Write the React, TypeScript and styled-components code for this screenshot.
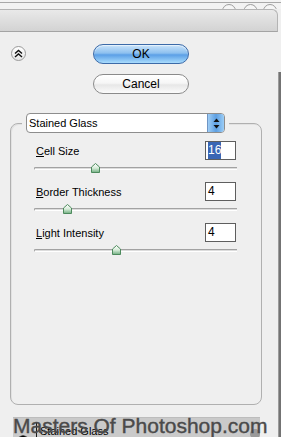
import React from "react";
import styled, { createGlobalStyle } from "styled-components";

const Global = createGlobalStyle`
  html, body { margin: 0; padding: 0; background: #efefef; }
  body { font-family: "Liberation Sans", Arial, sans-serif; }
  * { box-sizing: border-box; }
`;

const Root = styled.div`
  width: 281px;
  height: 437px;
  overflow: hidden;
  background: #efefef;
  display: flex;
  flex-direction: column;
  font-family: "Liberation Sans", Arial, sans-serif;
  color: #000;
`;

const TopStrip = styled.div`
  height: 9px;
  padding-top: 2px;
  background: #f3f3f3;
  display: flex;
  flex-direction: column;
`;

const TopLine = styled.div`
  height: 1px;
  background: #a9a9a9;
`;

const Circles = styled.svg`
  display: block;
  width: 281px;
  height: 6px;
`;

const Header = styled.div`
  height: 23px;
  margin-right: 3px;
  border-top: 1px solid #b4b4b4;
  border-right: 1px solid #b4b4b4;
  border-bottom: 1px solid #a4a4a4;
  border-top-right-radius: 6px;
  background: linear-gradient(to bottom, #e9e9e9, #d3d3d3);
`;

const Body = styled.div`
  flex: 1;
  display: flex;
`;

const Main = styled.div`
  flex: 1;
  display: flex;
  flex-direction: column;
`;

const RightEdge = styled.div`
  width: 3px;
  margin-top: 40px;
  border-left: 1px solid #9c9c9c;
  background: #737373;
`;

const ActionsRow = styled.div`
  display: flex;
  padding-top: 12px;
`;

const ExpandButton = styled.div`
  width: 15px;
  height: 15px;
  margin: 2px 0 0 11px;
  border-radius: 50%;
  border: 1px solid #9a9a9a;
  background: linear-gradient(to bottom, #ffffff, #e6e6e6);
  display: flex;
  align-items: center;
  justify-content: center;
`;

const ButtonColumn = styled.div`
  display: flex;
  flex-direction: column;
  gap: 10px;
  margin-left: 67px;
`;

const PillButton = styled.div<{ $primary?: boolean }>`
  width: 96px;
  height: 20px;
  border-radius: 10px;
  display: flex;
  align-items: center;
  justify-content: center;
  font-size: 12px;
  color: #000;
  border: 1px solid ${(p) => (p.$primary ? "#3c6aa8" : "#8a8a8a")};
  background: ${(p) =>
    p.$primary
      ? "linear-gradient(to bottom, #c9e3fa 0%, #8dc0ef 45%, #5b9fe6 55%, #a9dcfd 100%)"
      : "linear-gradient(to bottom, #ffffff 0%, #f6f6f6 45%, #e7e7e7 55%, #fbfbfb 100%)"};
  box-shadow: ${(p) => (p.$primary ? "inset 0 1px 1px rgba(255,255,255,0.6)" : "inset 0 1px 1px #fff")};
`;

const Group = styled.div`
  margin: 29px 0 0 10px;
  width: 252px;
  height: 282px;
  border: 1px solid #b0b0b0;
  border-radius: 8px;
  box-shadow: inset 1px 1px 0 #e2e2e2;
  display: flex;
  flex-direction: column;
  padding: 0 25px 0 25px;
`;

const DropdownWrap = styled.div`
  margin: -11px 0 0 -14px;
  padding: 0 4px;
  width: 207px;
  background: #efefef;
`;

const Dropdown = styled.div`
  height: 20px;
  display: flex;
  border: 1px solid #8d8d8d;
  border-radius: 4px;
  background: #fff;
  overflow: hidden;
`;

const DropdownText = styled.div`
  flex: 1;
  font-size: 11px;
  line-height: 18px;
  padding-left: 2px;
`;

const Stepper = styled.div`
  width: 17px;
  border-left: 1px solid #6f95c4;
  background: linear-gradient(to right, #9fcdf5, #5d9fe2 50%, #9bcdf6);
  display: flex;
  align-items: center;
  justify-content: center;
`;

const Param = styled.div`
  display: flex;
  flex-direction: column;
`;

const ParamRow = styled.div<{ $first?: boolean }>`
  height: 19px;
  margin-top: ${(p) => (p.$first ? "8px" : "0")};
  display: flex;
  justify-content: space-between;
  align-items: flex-start;
`;

const Label = styled.div`
  font-size: 11px;
  line-height: 13px;
  padding-top: 4px;
  u { text-decoration: underline; text-underline-offset: 1px; }
`;

const ValueBox = styled.div`
  width: 31px;
  height: 19px;
  border: 1px solid #5e5e5e;
  background: #fff;
  font-size: 12px;
  line-height: 17px;
  padding-left: 2px;
`;

const Selected = styled.span`
  background: #3a66b4;
  color: #fff;
  padding: 0 0 1px 0;
  display: inline-block;
  line-height: 16px;
`;

const SliderRow = styled.div`
  height: 22px;
  margin: 0 -1px 0 -2px;
  position: relative;
`;

const Track = styled.div`
  position: absolute;
  left: 0;
  right: 0;
  top: 7px;
  height: 3px;
  border-top: 1px solid #a2a2a2;
  border-left: 1px solid #a2a2a2;
  border-bottom: 1px solid #ffffff;
  border-radius: 2px 0 0 2px;
  background: #dcdcdc;
`;

const Thumb = styled.svg`
  position: absolute;
  top: 3px;
  width: 9px;
  height: 10px;
`;

const LayersBar = styled.div`
  margin: 12px 0 0 13px;
  width: 247px;
  height: 20px;
  background: #cacaca;
  border-top: 1px solid #bdbdbd;
  position: relative;
  display: flex;
  align-items: flex-start;
  padding-top: 4px;
`;

const EyeCell = styled.div`
  width: 23px;
  padding: 6px 0 0 4px;
`;

const LayerDivider = styled.div`
  width: 1px;
  height: 20px;
  background: #1a1a1a;
`;

const LayerName = styled.div`
  font-size: 11px;
  line-height: 13px;
  padding: 3px 0 0 3px;
  color: #000;
`;

const ScrollKnob = styled.div`
  margin-left: auto;
  margin-top: 7px;
  width: 10px;
  height: 10px;
  border-radius: 50%;
  background: #9a9a9a;
`;

const Watermark = styled.div`
  position: absolute;
  left: 0;
  top: -3px;
  font-family: "Liberation Sans", Arial, sans-serif;
  font-size: 21px;
  line-height: 21px;
  color: #4a4a4a;
  white-space: nowrap;
  -webkit-text-stroke: 0.4px #4a4a4a;
`;

const params = [
  { key: "C", rest: "ell Size", value: "16", pos: 0.305, selected: true },
  { key: "B", rest: "order Thickness", value: "4", pos: 0.167, selected: false },
  { key: "L", rest: "ight Intensity", value: "4", pos: 0.404, selected: false },
];

const TRACK_W = 203;

function ThumbIcon({ pos }: { pos: number }) {
  return (
    <Thumb viewBox="0 0 9 10" style={{ left: Math.round(pos * TRACK_W - 4.5) }}>
      <defs>
        <linearGradient id="thumbFill" x1="0" y1="0" x2="0" y2="1">
          <stop offset="0" stopColor="#ffffff" />
          <stop offset="0.5" stopColor="#d7ecd9" />
          <stop offset="1" stopColor="#6fae80" />
        </linearGradient>
      </defs>
      <path d="M4.5 0.5 L8.5 4 L8.5 9.5 L0.5 9.5 L0.5 4 Z" fill="url(#thumbFill)" stroke="#4d8a5d" strokeWidth="1" />
    </Thumb>
  );
}

export default function App() {
  return (
    <Root>
      <Global />
      <TopStrip>
        <TopLine />
        <Circles viewBox="0 0 281 6">
          <circle cx="229" cy="8" r="6.5" fill="#f6f6f6" stroke="#9d9d9d" strokeWidth="1" />
          <circle cx="250.5" cy="8" r="6.5" fill="#f6f6f6" stroke="#9d9d9d" strokeWidth="1" />
          <circle cx="270" cy="8" r="6.5" fill="#f6f6f6" stroke="#9d9d9d" strokeWidth="1" />
        </Circles>
      </TopStrip>
      <Header />
      <Body>
        <Main>
          <ActionsRow>
            <ExpandButton>
              <svg width="9" height="9" viewBox="0 0 9 9">
                <path d="M1 4.5 L4.5 1.5 L8 4.5 M1 8 L4.5 5 L8 8" fill="none" stroke="#111" strokeWidth="1.4" />
              </svg>
            </ExpandButton>
            <ButtonColumn>
              <PillButton $primary>OK</PillButton>
              <PillButton>Cancel</PillButton>
            </ButtonColumn>
          </ActionsRow>
          <Group>
            <DropdownWrap>
              <Dropdown>
                <DropdownText>Stained Glass</DropdownText>
                <Stepper>
                  <svg width="7" height="11" viewBox="0 0 7 11">
                    <path d="M3.5 0.5 L6.5 4 L0.5 4 Z" fill="#111" />
                    <path d="M0.5 7 L6.5 7 L3.5 10.5 Z" fill="#111" />
                  </svg>
                </Stepper>
              </Dropdown>
            </DropdownWrap>
            {params.map((p, i) => (
              <Param key={p.rest}>
                <ParamRow $first={i === 0}>
                  <Label>
                    <u>{p.key}</u>
                    {p.rest}
                  </Label>
                  <ValueBox>{p.selected ? <Selected>{p.value}</Selected> : p.value}</ValueBox>
                </ParamRow>
                <SliderRow>
                  <Track />
                  <ThumbIcon pos={p.pos} />
                </SliderRow>
              </Param>
            ))}
          </Group>
          <LayersBar>
            <EyeCell>
              <svg width="12" height="8" viewBox="0 0 12 8">
                <path d="M0.5 4 Q6 -1.5 11.5 4 Q6 9.5 0.5 4 Z" fill="#3a3a3a" />
                <circle cx="6" cy="4" r="2.2" fill="#000" />
              </svg>
            </EyeCell>
            <LayerDivider />
            <LayerName>Stained Glass</LayerName>
            <ScrollKnob />
            <Watermark>Masters Of Photoshop.com</Watermark>
          </LayersBar>
        </Main>
        <RightEdge />
      </Body>
    </Root>
  );
}
